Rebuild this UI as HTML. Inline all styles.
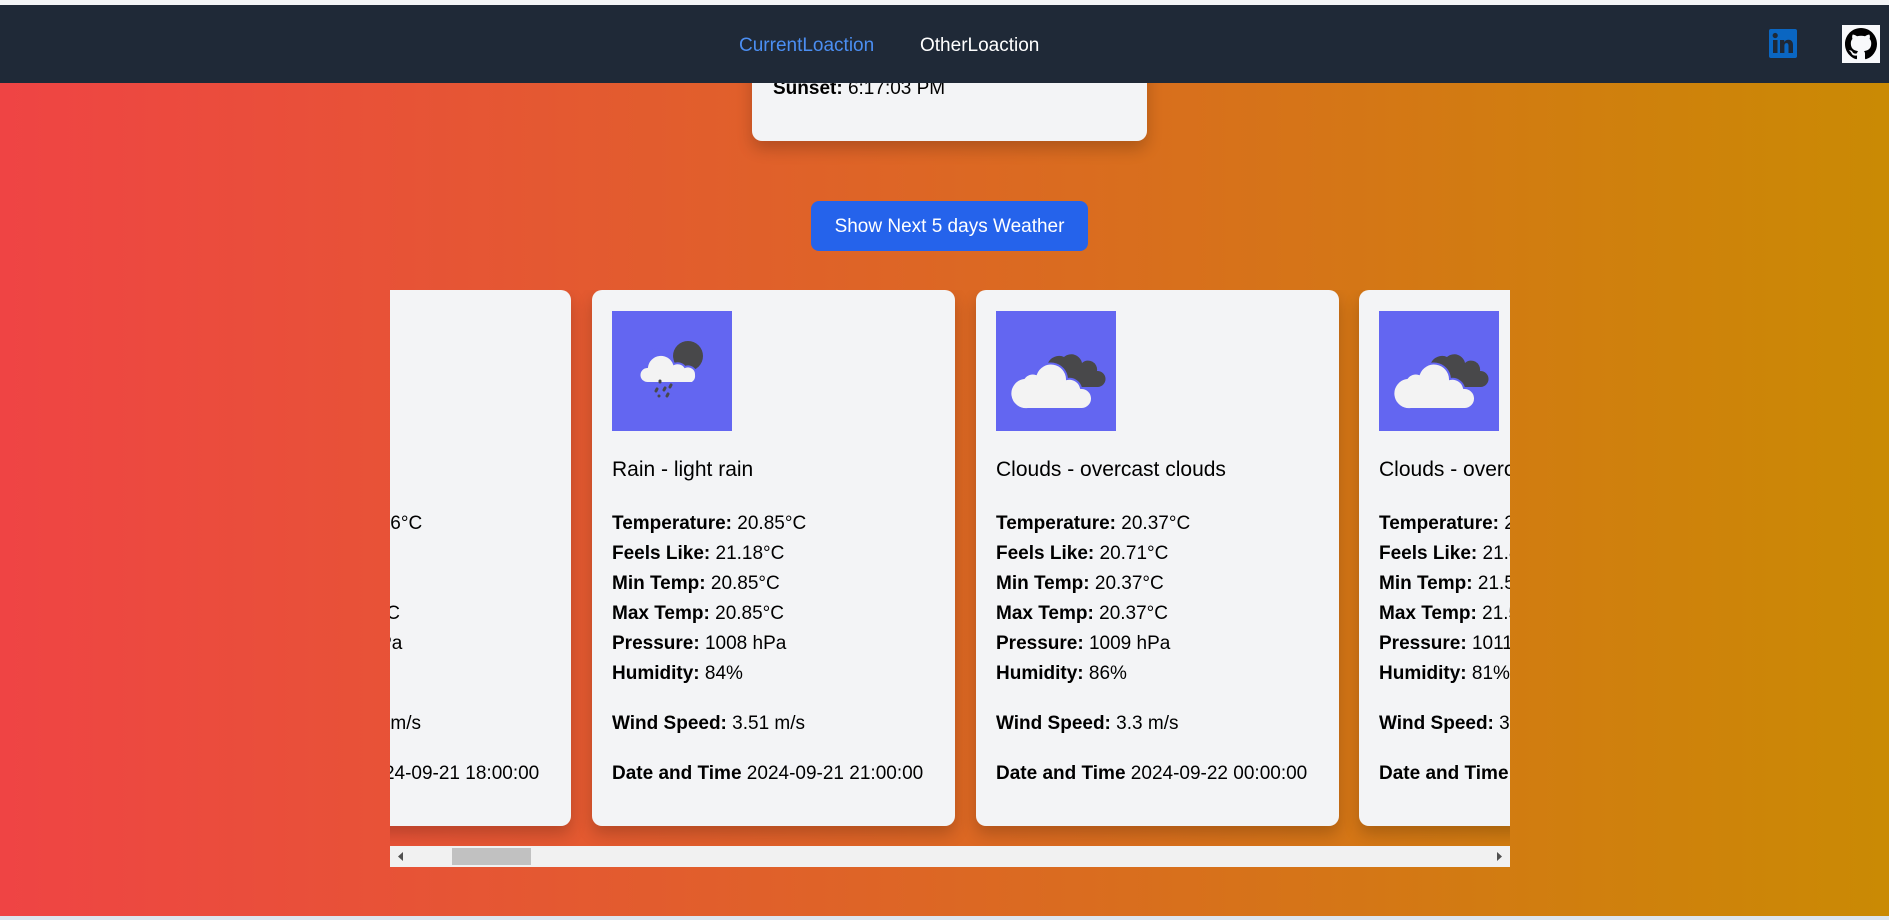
<!DOCTYPE html>
<html><head><meta charset="utf-8"><style>
*{margin:0;padding:0;box-sizing:border-box}
body{width:1889px;height:920px;overflow:hidden;font-family:"Liberation Sans",sans-serif;background:#dde5ee;position:relative}
.top{position:absolute;left:0;top:0;width:1889px;height:5px;background:#f3f4f6}
.bg{position:absolute;left:0;top:5px;width:1889px;height:911px;background:linear-gradient(90deg,#ef4444,#ca8a04)}
nav{position:absolute;left:0;top:5px;width:1889px;height:78px;background:#1f2937;z-index:5}
nav a{position:absolute;top:28px;font-size:19px;line-height:26px;text-decoration:none}
.tc{position:absolute;left:752px;top:40px;width:395px;height:101px;background:#f3f4f6;border-radius:10px;box-shadow:0 8px 16px rgba(0,0,0,.2)}
.tc p{position:absolute;left:21px;top:38px;font-size:19px;color:#000}
.btn{position:absolute;left:811px;top:201px;width:277px;height:50px;background:#2563eb;border-radius:8px;color:#fff;font-size:19px;text-align:center;line-height:52px}
.sc{position:absolute;left:390px;top:290px;width:1120px;height:577px;overflow:hidden}
.card{position:absolute;top:0;width:363px;height:536px;background:#f3f4f6;border-radius:10px;padding:21px 20px;box-shadow:0 8px 16px rgba(0,0,0,.2);white-space:nowrap;font-size:19px;color:#000}
.ic{width:120px;height:120px;background:#6366f1;display:block}
.t{font-size:21px;margin-top:24px;line-height:30px}
.l{line-height:30px}
.g{margin-top:20px}
b{font-weight:bold}
.bar{position:absolute;left:0;top:556px;width:1120px;height:21px;background:#f1f1f1}
.th{position:absolute;left:62px;top:2px;width:79px;height:17px;background:#c1c1c1}
</style></head><body>
<div class="top"></div>
<div class="bg"></div>
<nav>
<a style="left:739px;color:#4b8ef2">CurrentLoaction</a>
<a style="left:920px;color:#fff">OtherLoaction</a>
<svg style="position:absolute;left:1769px;top:24px" width="28" height="29" viewBox="0 0 28 29"><rect width="28" height="29" rx="2" fill="#0a66c2"/><rect x="4" y="11" width="4.5" height="13" fill="#1f2937"/><circle cx="6.2" cy="6.5" r="2.6" fill="#1f2937"/><path d="M11 11h4.2v2c1-1.6 2.5-2.3 4.3-2.3 3 0 4.5 2 4.5 5.5V24h-4.5v-7.3c0-1.7-.6-2.6-1.9-2.6-1.5 0-2.2 1-2.2 2.7V24H11z" fill="#1f2937"/></svg>
<div style="position:absolute;left:1842px;top:20px;width:38px;height:38px;background:#f8f9fb"></div>
<svg style="position:absolute;left:1845px;top:23px" width="32" height="32" viewBox="0 0 16 16"><path fill="#000" d="M8 0C3.58 0 0 3.58 0 8c0 3.540 2.29 6.53 5.470 7.59.4.07.55-.17.55-.38 0-.19-.01-.82-.01-1.49-2.01.37-2.53-.49-2.69-.94-.09-.23-.48-.94-.82-1.13-.28-.15-.68-.52-.01-.53.63-.01 1.08.58 1.23.82.72 1.21 1.87.87 2.33.66.07-.52.28-.87.51-1.07-1.78-.2-3.64-.89-3.64-3.95 0-.87.31-1.59.82-2.15-.08-.2-.36-1.02.08-2.12 0 0 .67-.21 2.2.82.64-.18 1.32-.27 2-.27.68 0 1.36.09 2 .27 1.53-1.04 2.2-.82 2.2-.82.44 1.1.16 1.92.08 2.12.51.56.82 1.27.82 2.15 0 3.07-1.87 3.75-3.65 3.95.29.25.54.73.54 1.48 0 1.070-.01 1.93-.01 2.2 0 .21.15.46.55.38A8.013 8.013 0 0016 8c0-4.42-3.58-8-8-8z"/></svg>
</nav>
<div class="tc"><p><b>Sunset:</b> 6:17:03 PM</p></div>
<div class="btn">Show Next 5 days Weather</div>
<div class="sc">
<div class="card" style="left:-182px">
<svg class="ic" viewBox="0 0 120 120"><rect width="120" height="120" fill="#6366f1"/></svg>
<div class="t">Rain - light rain</div>
<div class="l" style="margin-top:24px"><b>Temperature:</b> 20.76°C</div>
<div class="l"><b>Feels Like:</b> 21.1°C</div>
<div class="l"><b>Min Temp:</b> 20.7°C</div>
<div class="l"><b>Max Temp:</b> 20.76°C</div>
<div class="l"><b>Pressure:</b> 1008 hPa</div>
<div class="l"><b>Humidity:</b> 85</div>
<div class="l g"><b>Wind Speed:</b> 3.06 m/s</div>
<div class="l g"><b>Date and Time</b> 2024-09-21 18:00:00</div>
</div>
<div class="card" style="left:202px">
<svg class="ic" viewBox="0 0 120 120"><rect width="120" height="120" fill="#6366f1"/><circle cx="76" cy="45" r="15" fill="#48484a"/><circle cx="47" cy="52" r="15" fill="#6366f1"/><path d="M36 72a8 8 0 0 1-1-16a14 14 0 0 1 27-3a9 9 0 0 1 11 3a8 8 0 0 1 11 8a8 8 0 0 1-4 8z" fill="#f3f3f3" stroke="#6366f1" stroke-width="2"/><g stroke="#48484a" stroke-width="3" stroke-linecap="round"><path d="M48 70l0 1M45 78l-1 2M53 77l-1 2M59 74l-1 2M47 85l0 0M56 83l-1 2"/></g></svg>
<div class="t">Rain - light rain</div>
<div class="l" style="margin-top:24px"><b>Temperature:</b> 20.85°C</div>
<div class="l"><b>Feels Like:</b> 21.18°C</div>
<div class="l"><b>Min Temp:</b> 20.85°C</div>
<div class="l"><b>Max Temp:</b> 20.85°C</div>
<div class="l"><b>Pressure:</b> 1008 hPa</div>
<div class="l"><b>Humidity:</b> 84%</div>
<div class="l g"><b>Wind Speed:</b> 3.51 m/s</div>
<div class="l g"><b>Date and Time</b> 2024-09-21 21:00:00</div>
</div>
<div class="card" style="left:586px">
<svg class="ic" viewBox="0 0 120 120"><rect width="120" height="120" fill="#6366f1"/><path d="M58 68a12 12 0 0 1 10-22a11 11 0 0 1 18 6a9 9 0 0 1 15 8a8 8 0 0 1 1 16H70z" fill="#48484a"/><path d="M32 98a15 15 0 0 1-4-31a11 11 0 0 1 12-4a16 16 0 0 1 31 5a12 12 0 0 1 14 9a10 10 0 0 1 1 21z" fill="#f3f3f3" stroke="#6366f1" stroke-width="2"/></svg>
<div class="t">Clouds - overcast clouds</div>
<div class="l" style="margin-top:24px"><b>Temperature:</b> 20.37°C</div>
<div class="l"><b>Feels Like:</b> 20.71°C</div>
<div class="l"><b>Min Temp:</b> 20.37°C</div>
<div class="l"><b>Max Temp:</b> 20.37°C</div>
<div class="l"><b>Pressure:</b> 1009 hPa</div>
<div class="l"><b>Humidity:</b> 86%</div>
<div class="l g"><b>Wind Speed:</b> 3.3 m/s</div>
<div class="l g"><b>Date and Time</b> 2024-09-22 00:00:00</div>
</div>
<div class="card" style="left:969px">
<svg class="ic" viewBox="0 0 120 120"><rect width="120" height="120" fill="#6366f1"/><path d="M58 68a12 12 0 0 1 10-22a11 11 0 0 1 18 6a9 9 0 0 1 15 8a8 8 0 0 1 1 16H70z" fill="#48484a"/><path d="M32 98a15 15 0 0 1-4-31a11 11 0 0 1 12-4a16 16 0 0 1 31 5a12 12 0 0 1 14 9a10 10 0 0 1 1 21z" fill="#f3f3f3" stroke="#6366f1" stroke-width="2"/></svg>
<div class="t">Clouds - overcast clouds</div>
<div class="l" style="margin-top:24px"><b>Temperature:</b> 21.52°C</div>
<div class="l"><b>Feels Like:</b> 21.84°C</div>
<div class="l"><b>Min Temp:</b> 21.52°C</div>
<div class="l"><b>Max Temp:</b> 21.52°C</div>
<div class="l"><b>Pressure:</b> 1011 hPa</div>
<div class="l"><b>Humidity:</b> 81%</div>
<div class="l g"><b>Wind Speed:</b> 3.1 m/s</div>
<div class="l g"><b>Date and Time</b> 2024-09-22 03:00:00</div>
</div>
<div class="bar"><div class="th"></div>
<svg style="position:absolute;left:8px;top:6px" width="6" height="9"><path d="M5 0v9L0 4.5z" fill="#505050"/></svg>
<svg style="position:absolute;left:1107px;top:6px" width="6" height="9"><path d="M0 0v9L5 4.5z" fill="#505050"/></svg>
</div>
</div>
</body></html>
